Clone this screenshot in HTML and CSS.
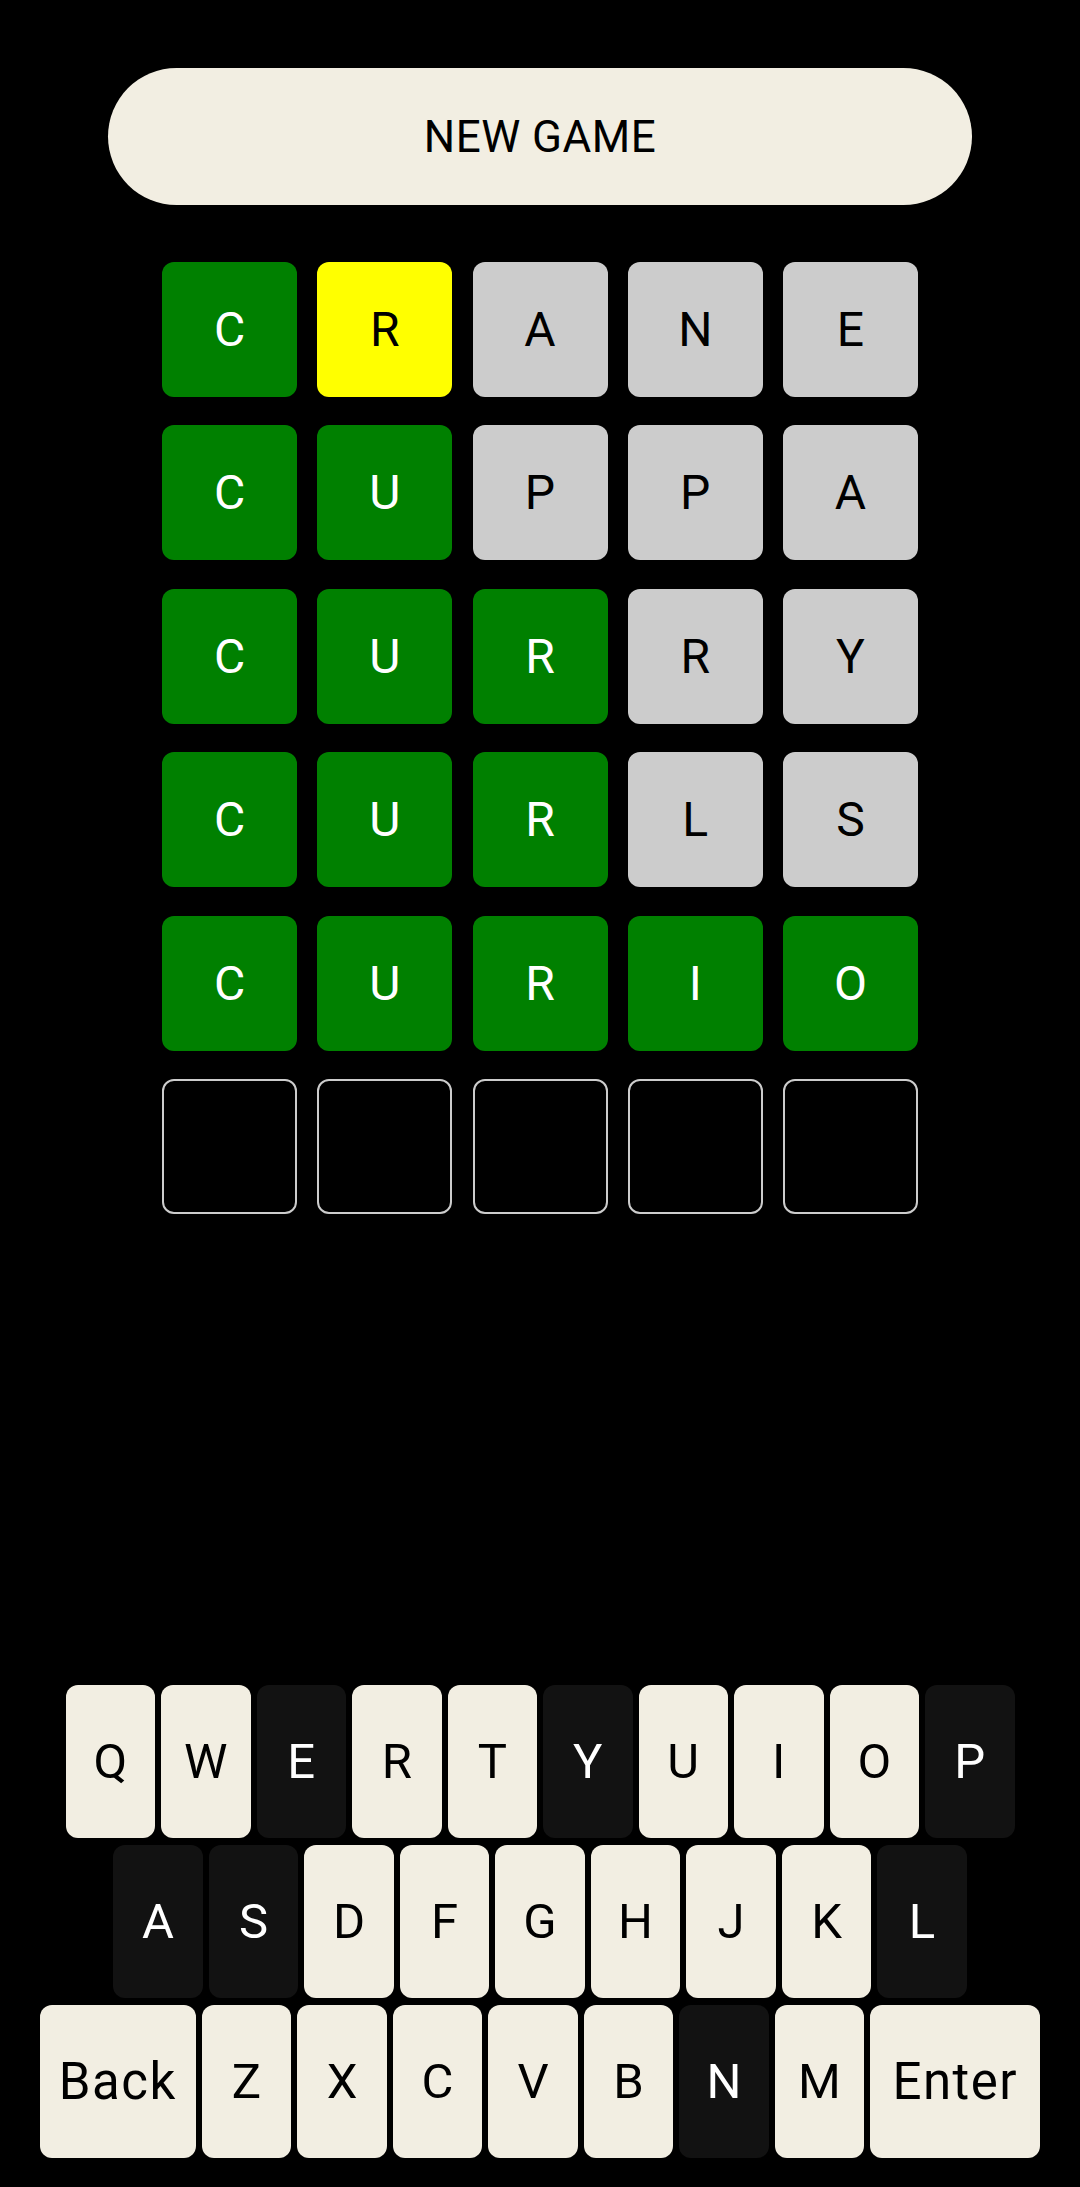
FILE: index.html
```html
<!DOCTYPE html>
<html lang="en">
<head>
<meta charset="utf-8">
<title>Wordle</title>
<link rel="stylesheet" href="styles.css">
</head>
<body>
<main class="app">
  <button class="new-game">NEW GAME</button>

  <section class="board">
    <div class="tile green">C</div><div class="tile yellow">R</div><div class="tile gray">A</div><div class="tile gray">N</div><div class="tile gray">E</div>
    <div class="tile green">C</div><div class="tile green">U</div><div class="tile gray">P</div><div class="tile gray">P</div><div class="tile gray">A</div>
    <div class="tile green">C</div><div class="tile green">U</div><div class="tile green">R</div><div class="tile gray">R</div><div class="tile gray">Y</div>
    <div class="tile green">C</div><div class="tile green">U</div><div class="tile green">R</div><div class="tile gray">L</div><div class="tile gray">S</div>
    <div class="tile green">C</div><div class="tile green">U</div><div class="tile green">R</div><div class="tile green">I</div><div class="tile green">O</div>
    <div class="tile empty"></div><div class="tile empty"></div><div class="tile empty"></div><div class="tile empty"></div><div class="tile empty"></div>
  </section>

  <section class="keyboard">
    <div class="key-row">
      <div class="key">Q</div><div class="key">W</div><div class="key used">E</div><div class="key">R</div><div class="key">T</div><div class="key used">Y</div><div class="key">U</div><div class="key">I</div><div class="key">O</div><div class="key used">P</div>
    </div>
    <div class="key-row">
      <div class="key used">A</div><div class="key used">S</div><div class="key">D</div><div class="key">F</div><div class="key">G</div><div class="key">H</div><div class="key">J</div><div class="key">K</div><div class="key used">L</div>
    </div>
    <div class="key-row">
      <div class="key key-back">Back</div><div class="key">Z</div><div class="key">X</div><div class="key">C</div><div class="key">V</div><div class="key">B</div><div class="key used">N</div><div class="key">M</div><div class="key key-enter">Enter</div>
    </div>
  </section>
</main>
</body>
</html>
```

FILE: styles.css
```css
html, body {
  margin: 0;
  padding: 0;
  background: #000;
}

body {
  font-family: Roboto, "Noto Sans", "Liberation Sans", sans-serif;
}

.app {
  display: flex;
  flex-direction: column;
  align-items: center;
  min-height: 2187px;
  box-sizing: border-box;
  padding: 68px 0 29px;
}

.new-game {
  width: 864px;
  height: 137px;
  border: none;
  border-radius: 69px;
  background: #f2eee2;
  color: #000;
  font-family: inherit;
  font-size: 44px;
  letter-spacing: 0.5px;
  padding: 0;
}

.board {
  margin-top: 57px;
  display: grid;
  grid-template-columns: repeat(5, 135px);
  grid-auto-rows: 135px;
  column-gap: 20.25px;
  row-gap: 28.4px;
}

.tile {
  border-radius: 12px;
  display: flex;
  align-items: center;
  justify-content: center;
  font-size: 48px;
  box-sizing: border-box;
}

.tile.green { background: #008000; color: #fff; }
.tile.yellow { background: #ffff00; color: #000; }
.tile.gray { background: #cccccc; color: #000; }
.tile.empty { border: 2.5px solid #cccccc; }

.keyboard {
  margin-top: auto;
  display: flex;
  flex-direction: column;
  gap: 7px;
}

.key-row {
  display: flex;
  justify-content: center;
  gap: 6px;
}

.key {
  width: 89.5px;
  height: 153px;
  border-radius: 12px;
  background: #f2eee2;
  color: #000;
  display: flex;
  align-items: center;
  justify-content: center;
  font-size: 49px;
  flex: none;
}

.key.used {
  background: #121212;
  color: #fff;
}

.key-back,
.key-enter {
  font-size: 51px;
  letter-spacing: 1.5px;
}

.key-back { width: 156px; }
.key-enter { width: 170px; }
```
